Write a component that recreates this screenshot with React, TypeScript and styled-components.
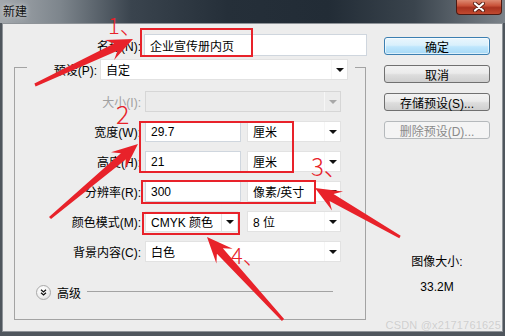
import React from "react";
import styled, { createGlobalStyle } from "styled-components";

const RED = "#e8222a";

const GlobalStyle = createGlobalStyle`
  html, body { margin: 0; padding: 0; }
  body {
    width: 505px;
    height: 336px;
    overflow: hidden;
    font-family: "Liberation Sans", "Noto Sans CJK SC", sans-serif;
    font-size: 12px;
    color: #000;
  }
`;

const Window = styled.div`
  position: relative;
  width: 505px;
  height: 336px;
  display: flex;
  flex-direction: column;
  background: #4f565d;
`;

const TitleBar = styled.div`
  height: 23px;
  flex: 0 0 23px;
  display: flex;
  justify-content: space-between;
  align-items: flex-start;
  padding: 0 3px 0 3px;
  background: linear-gradient(
    90deg,
    #a4a9ae 0%,
    #7d858c 12%,
    #3a444e 26%,
    #252f39 45%,
    #222c36 65%,
    #3a444d 82%,
    #7c838a 100%
  );
`;

const Title = styled.div`
  font-family: "Noto Sans CJK SC", sans-serif;
  font-size: 12px;
  line-height: 22px;
  color: #111;
  text-shadow: 0 0 5px rgba(255, 255, 255, 0.8);
`;

const CloseButton = styled.div`
  width: 46px;
  height: 15px;
  box-sizing: border-box;
  border: 1px solid #4e1a12;
  border-top: none;
  border-radius: 0 0 4px 4px;
  background: linear-gradient(180deg, #dd8a72 0%, #c9533a 40%, #a9321f 55%, #c14a30 100%);
  display: flex;
  align-items: center;
  justify-content: center;
`;

const Frame = styled.div`
  flex: 1;
  display: flex;
  padding: 0 2px 4px 2px;
`;

const Panel = styled.div`
  flex: 1;
  display: flex;
  background: #ededed;
  border: 1px solid #8e9398;
`;

const LeftCol = styled.div`
  flex: 0 0 364px;
  display: flex;
  flex-direction: column;
`;

const RightCol = styled.div`
  flex: 1;
  display: flex;
  flex-direction: column;
  padding: 13px 0 0 17px;
`;

const Row = styled.div<{ $top?: number }>`
  display: flex;
  align-items: center;
  gap: 0;
  margin-top: ${(p) => p.$top ?? 0}px;
`;

const Label = styled.div<{ $w: number; $gap?: number }>`
  width: ${(p) => p.$w}px;
  margin-right: ${(p) => p.$gap ?? 4}px;
  text-align: right;
  white-space: nowrap;
  font-size: 12px;
  color: ${(p) => (p.color ? p.color : "#000")};
`;

const Field = styled.div<{ $w: number; $h?: number; $disabled?: boolean }>`
  width: ${(p) => p.$w}px;
  height: ${(p) => p.$h ?? 21}px;
  box-sizing: border-box;
  display: flex;
  align-items: center;
  background: ${(p) => (p.$disabled ? "#ebebeb" : "#fff")};
  border: 1px solid ${(p) => (p.$disabled ? "#d6d6d6" : "#cfd6de")};
  padding-left: 5px;
  font-size: 12px;
  white-space: nowrap;
  overflow: hidden;
`;

const SelectBox = styled(Field)`
  border-color: ${(p) => (p.$disabled ? "#d6d6d6" : "#e2e2e2")};
  padding-right: 0;
`;

const SelectText = styled.span`
  flex: 1;
`;

const Caret = styled.div<{ $disabled?: boolean; $divider?: boolean }>`
  width: 16px;
  height: 100%;
  box-sizing: border-box;
  display: flex;
  align-items: center;
  justify-content: center;
  border-left: 1px solid ${(p) => (p.$divider ? "#e4e4e4" : "#f6f6f6")};

  &::after {
    content: "";
    border-left: 4px solid transparent;
    border-right: 4px solid transparent;
    border-top: 4px solid ${(p) => (p.$disabled ? "#a8a8a8" : "#111")};
  }
`;

const Gap = styled.div<{ $w: number }>`
  width: ${(p) => p.$w}px;
  flex: 0 0 auto;
`;

const Group = styled.div`
  margin: 11px 0 0 11px;
  width: 352px;
  box-sizing: border-box;
  border: 1px solid #a3a3a3;
  display: flex;
  flex-direction: column;
  padding-bottom: 18px;
`;

const Legend = styled.div`
  align-self: flex-start;
  margin: -9px 0 0 12px;
  padding-right: 7px;
  background: #ededed;
  display: flex;
  align-items: center;
`;

const AdvancedRow = styled.div`
  display: flex;
  align-items: center;
  margin-top: 22px;
  padding-left: 21px;
  padding-right: 32px;
`;

const ExpandButton = styled.div`
  width: 15px;
  height: 15px;
  box-sizing: border-box;
  border-radius: 50%;
  border: 1px solid #a9a9a9;
  background: radial-gradient(circle at 40% 30%, #ffffff 0%, #f2f2f2 50%, #d4d4d4 100%);
  display: flex;
  align-items: center;
  justify-content: center;
`;

const AdvancedText = styled.span`
  margin-left: 6px;
  font-family: "Noto Sans CJK SC", sans-serif;
  font-size: 12px;
`;

const Rule = styled.div`
  flex: 1;
  height: 1px;
  margin: -2px 0 0 6px;
  background: #a3a3a3;
`;

const Button = styled.div<{ $primary?: boolean; $disabled?: boolean }>`
  width: 106px;
  height: 18px;
  box-sizing: border-box;
  margin-bottom: 10px;
  border-radius: 3px;
  display: flex;
  align-items: center;
  justify-content: center;
  font-size: 12px;
  color: ${(p) => (p.$disabled ? "#8a8a8a" : "#000")};
  border: 1px solid ${(p) => (p.$primary ? "#3c7fb1" : p.$disabled ? "#b5b9bc" : "#707070")};
  background: ${(p) =>
    p.$primary
      ? "linear-gradient(180deg, #eaf6fd 0%, #d9f0fc 45%, #bee6fd 55%, #a7d9f5 100%)"
      : p.$disabled
      ? "#f4f4f4"
      : "linear-gradient(180deg, #f2f2f2 0%, #ebebeb 45%, #dddddd 55%, #cfcfcf 100%)"};
  box-shadow: ${(p) => (p.$primary ? "inset 0 0 0 1px rgba(255,255,255,0.6)" : "none")};
`;

const ImageSize = styled.div`
  width: 106px;
  margin-top: 105px;
  text-align: center;
  line-height: 16px;
`;

const SizeValue = styled.div`
  margin-top: 9px;
`;

const Watermark = styled.div`
  position: absolute;
  right: 4px;
  bottom: 5px;
  font-size: 11px;
  color: #cfcfcf;
  text-shadow: 0 0 1px #f4f4f4;
  letter-spacing: 0.2px;
`;

const Overlay = styled.svg`
  position: absolute;
  left: 0;
  top: 0;
  pointer-events: none;
`;

const Mark = styled.text`
  font-family: "Noto Sans CJK SC", "Noto Sans", sans-serif;
  font-weight: 300;
  fill: ${RED};
`;

type SelectProps = { value: string; w: number; disabled?: boolean; divider?: boolean };

const Select = ({ value, w, disabled, divider }: SelectProps) => (
  <SelectBox $w={w} $disabled={disabled}>
    <SelectText>{value}</SelectText>
    <Caret $disabled={disabled} $divider={divider} />
  </SelectBox>
);

// tapered annotation arrow from tail to tip
function arrow(tx: number, ty: number, hx: number, hy: number) {
  const dx = hx - tx;
  const dy = hy - ty;
  const len = Math.hypot(dx, dy);
  const ux = dx / len;
  const uy = dy / len;
  const nx = -uy;
  const ny = ux;
  const headL = 26;
  const neckBack = 19;
  const headW = 22;
  const neckW = 8;
  const tailW = 1.5;
  const at = (back: number, side: number) => {
    const x = hx - ux * back + nx * side;
    const y = hy - uy * back + ny * side;
    return `${x.toFixed(1)},${y.toFixed(1)}`;
  };
  return [
    `${(tx + nx * tailW).toFixed(1)},${(ty + ny * tailW).toFixed(1)}`,
    at(neckBack, neckW / 2),
    at(headL, headW / 2),
    `${hx},${hy}`,
    at(headL, -headW / 2),
    at(neckBack, -neckW / 2),
    `${(tx - nx * tailW).toFixed(1)},${(ty - ny * tailW).toFixed(1)}`,
  ].join(" ");
}

const Annotations = () => (
  <Overlay width={505} height={336} viewBox="0 0 505 336">
    <g fill="none" stroke={RED} strokeWidth={2}>
      <rect x={141} y={29} width={111} height={27} />
      <rect x={140} y={122} width={153} height={50} />
      <rect x={142} y={181} width={173} height={22} />
      <rect x={143} y={213} width={96} height={21} />
    </g>
    <g fill={RED}>
      <polygon points={arrow(35, 85, 133, 39)} />
      <polygon points={arrow(50, 218, 138, 144)} />
      <polygon points={arrow(400, 237, 315, 188)} />
      <polygon points={arrow(283, 320, 207, 237)} />
    </g>
    <Mark x={108} y={34} fontSize={22}>1、</Mark>
    <Mark x={116} y={124} fontSize={25}>2</Mark>
    <Mark x={311} y={176} fontSize={24}>3、</Mark>
    <Mark x={231} y={264} fontSize={22}>4、</Mark>
  </Overlay>
);

const App = () => {
  return (
    <>
      <GlobalStyle />
      <Window>
        <TitleBar>
          <Title>新建</Title>
          <CloseButton>
            <svg width="14" height="10" viewBox="0 0 14 10">
              <path d="M3 1.5 L11 8.5 M11 1.5 L3 8.5" stroke="#5a2015" strokeWidth="4" strokeLinecap="round" />
              <path d="M3 1.5 L11 8.5 M11 1.5 L3 8.5" stroke="#fff" strokeWidth="2.2" strokeLinecap="round" />
            </svg>
          </CloseButton>
        </TitleBar>
        <Frame>
          <Panel>
            <LeftCol>
              <Row $top={10}>
                <Label $w={138} $gap={3}>名称(N):</Label>
                <Field $w={223} $h={22}>企业宣传册内页</Field>
              </Row>
              <Group>
                <Legend>
                  <Label $w={73} $gap={0} style={{ paddingRight: 3, boxSizing: "border-box" }}>
                    预设(P):
                  </Label>
                  <Select value="自定" w={248} />
                </Legend>
                <Row $top={11}>
                  <Label $w={126} color="#a0a0a0">大小(I):</Label>
                  <Select value="" w={196} disabled />
                </Row>
                <Row $top={9}>
                  <Label $w={126}>宽度(W):</Label>
                  <Field $w={96}>29.7</Field>
                  <Gap $w={6} />
                  <Select value="厘米" w={94} />
                </Row>
                <Row $top={9}>
                  <Label $w={126}>高度(H):</Label>
                  <Field $w={96}>21</Field>
                  <Gap $w={6} />
                  <Select value="厘米" w={94} />
                </Row>
                <Row $top={9}>
                  <Label $w={126}>分辨率(R):</Label>
                  <Field $w={96}>300</Field>
                  <Gap $w={6} />
                  <Select value="像素/英寸" w={94} />
                </Row>
                <Row $top={9}>
                  <Label $w={126}>颜色模式(M):</Label>
                  <Select value="CMYK 颜色" w={93} divider />
                  <Gap $w={9} />
                  <Select value="8 位" w={94} />
                </Row>
                <Row $top={9}>
                  <Label $w={126}>背景内容(C):</Label>
                  <Select value="白色" w={196} />
                </Row>
                <AdvancedRow>
                  <ExpandButton>
                    <svg width="7" height="7" viewBox="0 0 7 7">
                      <path d="M1 0.8 L3.5 3 L6 0.8 M1 3.8 L3.5 6 L6 3.8" fill="none" stroke="#111" strokeWidth="1.3" />
                    </svg>
                  </ExpandButton>
                  <AdvancedText>高级</AdvancedText>
                  <Rule />
                </AdvancedRow>
              </Group>
            </LeftCol>
            <RightCol>
              <Button $primary>确定</Button>
              <Button>取消</Button>
              <Button>存储预设(S)...</Button>
              <Button $disabled>删除预设(D)...</Button>
              <ImageSize>
                <div>图像大小:</div>
                <SizeValue>33.2M</SizeValue>
              </ImageSize>
            </RightCol>
          </Panel>
        </Frame>
        <Watermark>CSDN @x2171761625</Watermark>
        <Annotations />
      </Window>
    </>
  );
};

export default App;
